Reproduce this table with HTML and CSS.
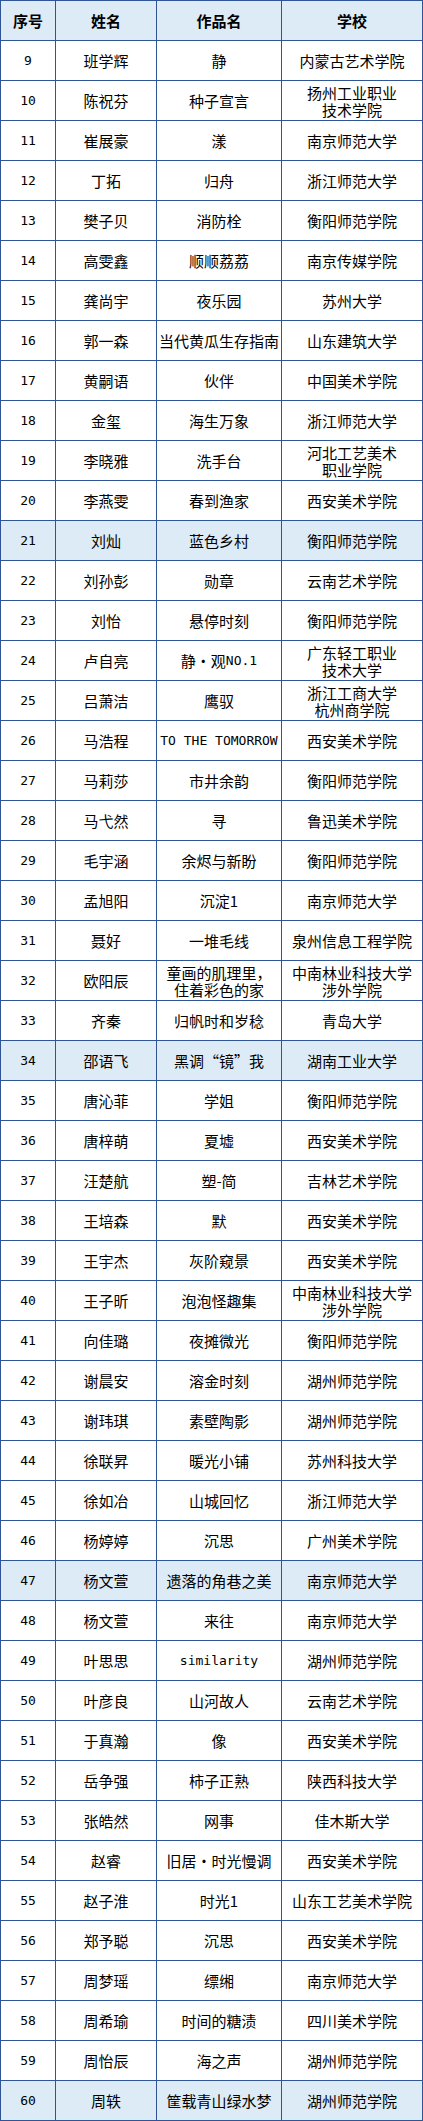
FILE: index.html
```html
<!DOCTYPE html>
<html lang="zh-CN">
<head>
<meta charset="utf-8">
<title>作品名单</title>
<link rel="stylesheet" href="styles.css">
</head>
<body>
<div class="sheet">
  <div class="row head"><div class="cell">序号</div><div class="cell">姓名</div><div class="cell">作品名</div><div class="cell">学校</div></div>
  <div class="row"><div class="cell num">9</div><div class="cell">班学辉</div><div class="cell">静</div><div class="cell">内蒙古艺术学院</div></div>
  <div class="row"><div class="cell num">10</div><div class="cell">陈祝芬</div><div class="cell">种子宣言</div><div class="cell">扬州工业职业<br>技术学院</div></div>
  <div class="row"><div class="cell num">11</div><div class="cell">崔展豪</div><div class="cell">漾</div><div class="cell">南京师范大学</div></div>
  <div class="row"><div class="cell num">12</div><div class="cell">丁拓</div><div class="cell">归舟</div><div class="cell">浙江师范大学</div></div>
  <div class="row"><div class="cell num">13</div><div class="cell">樊子贝</div><div class="cell">消防栓</div><div class="cell">衡阳师范学院</div></div>
  <div class="row"><div class="cell num">14</div><div class="cell">高雯鑫</div><div class="cell">顺顺荔荔</div><div class="cell">南京传媒学院</div></div>
  <div class="row"><div class="cell num">15</div><div class="cell">龚尚宇</div><div class="cell">夜乐园</div><div class="cell">苏州大学</div></div>
  <div class="row"><div class="cell num">16</div><div class="cell">郭一森</div><div class="cell">当代黄瓜生存指南</div><div class="cell">山东建筑大学</div></div>
  <div class="row"><div class="cell num">17</div><div class="cell">黄嗣语</div><div class="cell">伙伴</div><div class="cell">中国美术学院</div></div>
  <div class="row"><div class="cell num">18</div><div class="cell">金玺</div><div class="cell">海生万象</div><div class="cell">浙江师范大学</div></div>
  <div class="row"><div class="cell num">19</div><div class="cell">李晓雅</div><div class="cell">洗手台</div><div class="cell">河北工艺美术<br>职业学院</div></div>
  <div class="row"><div class="cell num">20</div><div class="cell">李燕雯</div><div class="cell">春到渔家</div><div class="cell">西安美术学院</div></div>
  <div class="row hl"><div class="cell num">21</div><div class="cell">刘灿</div><div class="cell">蓝色乡村</div><div class="cell">衡阳师范学院</div></div>
  <div class="row"><div class="cell num">22</div><div class="cell">刘孙彭</div><div class="cell">勋章</div><div class="cell">云南艺术学院</div></div>
  <div class="row"><div class="cell num">23</div><div class="cell">刘怡</div><div class="cell">悬停时刻</div><div class="cell">衡阳师范学院</div></div>
  <div class="row"><div class="cell num">24</div><div class="cell">卢自亮</div><div class="cell">静・观<span class="mono">NO.1</span></div><div class="cell">广东轻工职业<br>技术大学</div></div>
  <div class="row"><div class="cell num">25</div><div class="cell">吕萧洁</div><div class="cell">鹰驭</div><div class="cell">浙江工商大学<br>杭州商学院</div></div>
  <div class="row"><div class="cell num">26</div><div class="cell">马浩程</div><div class="cell mono">TO THE TOMORROW</div><div class="cell">西安美术学院</div></div>
  <div class="row"><div class="cell num">27</div><div class="cell">马莉莎</div><div class="cell">市井余韵</div><div class="cell">衡阳师范学院</div></div>
  <div class="row"><div class="cell num">28</div><div class="cell">马弋然</div><div class="cell">寻</div><div class="cell">鲁迅美术学院</div></div>
  <div class="row"><div class="cell num">29</div><div class="cell">毛宇涵</div><div class="cell">余烬与新盼</div><div class="cell">衡阳师范学院</div></div>
  <div class="row"><div class="cell num">30</div><div class="cell">孟旭阳</div><div class="cell">沉淀1</div><div class="cell">南京师范大学</div></div>
  <div class="row"><div class="cell num">31</div><div class="cell">聂好</div><div class="cell">一堆毛线</div><div class="cell">泉州信息工程学院</div></div>
  <div class="row"><div class="cell num">32</div><div class="cell">欧阳辰</div><div class="cell">童画的肌理里，<br>住着彩色的家</div><div class="cell">中南林业科技大学<br>涉外学院</div></div>
  <div class="row"><div class="cell num">33</div><div class="cell">齐秦</div><div class="cell">归帆时和岁稔</div><div class="cell">青岛大学</div></div>
  <div class="row hl"><div class="cell num">34</div><div class="cell">邵语飞</div><div class="cell">黑调“镜”我</div><div class="cell">湖南工业大学</div></div>
  <div class="row"><div class="cell num">35</div><div class="cell">唐沁菲</div><div class="cell">学姐</div><div class="cell">衡阳师范学院</div></div>
  <div class="row"><div class="cell num">36</div><div class="cell">唐梓萌</div><div class="cell">夏墟</div><div class="cell">西安美术学院</div></div>
  <div class="row"><div class="cell num">37</div><div class="cell">汪楚航</div><div class="cell">塑-简</div><div class="cell">吉林艺术学院</div></div>
  <div class="row"><div class="cell num">38</div><div class="cell">王培森</div><div class="cell">默</div><div class="cell">西安美术学院</div></div>
  <div class="row"><div class="cell num">39</div><div class="cell">王宇杰</div><div class="cell">灰阶窥景</div><div class="cell">西安美术学院</div></div>
  <div class="row"><div class="cell num">40</div><div class="cell">王子昕</div><div class="cell">泡泡怪趣集</div><div class="cell">中南林业科技大学<br>涉外学院</div></div>
  <div class="row"><div class="cell num">41</div><div class="cell">向佳璐</div><div class="cell">夜摊微光</div><div class="cell">衡阳师范学院</div></div>
  <div class="row"><div class="cell num">42</div><div class="cell">谢晨安</div><div class="cell">溶金时刻</div><div class="cell">湖州师范学院</div></div>
  <div class="row"><div class="cell num">43</div><div class="cell">谢玮琪</div><div class="cell">素壁陶影</div><div class="cell">湖州师范学院</div></div>
  <div class="row"><div class="cell num">44</div><div class="cell">徐联昇</div><div class="cell">暖光小铺</div><div class="cell">苏州科技大学</div></div>
  <div class="row"><div class="cell num">45</div><div class="cell">徐如冶</div><div class="cell">山城回忆</div><div class="cell">浙江师范大学</div></div>
  <div class="row"><div class="cell num">46</div><div class="cell">杨婷婷</div><div class="cell">沉思</div><div class="cell">广州美术学院</div></div>
  <div class="row hl"><div class="cell num">47</div><div class="cell">杨文萱</div><div class="cell">遗落的角巷之美</div><div class="cell">南京师范大学</div></div>
  <div class="row"><div class="cell num">48</div><div class="cell">杨文萱</div><div class="cell">来往</div><div class="cell">南京师范大学</div></div>
  <div class="row"><div class="cell num">49</div><div class="cell">叶思思</div><div class="cell mono">similarity</div><div class="cell">湖州师范学院</div></div>
  <div class="row"><div class="cell num">50</div><div class="cell">叶彦良</div><div class="cell">山河故人</div><div class="cell">云南艺术学院</div></div>
  <div class="row"><div class="cell num">51</div><div class="cell">于真瀚</div><div class="cell">像</div><div class="cell">西安美术学院</div></div>
  <div class="row"><div class="cell num">52</div><div class="cell">岳争强</div><div class="cell">柿子正熟</div><div class="cell">陕西科技大学</div></div>
  <div class="row"><div class="cell num">53</div><div class="cell">张皓然</div><div class="cell">网事</div><div class="cell">佳木斯大学</div></div>
  <div class="row"><div class="cell num">54</div><div class="cell">赵睿</div><div class="cell">旧居•时光慢调</div><div class="cell">西安美术学院</div></div>
  <div class="row"><div class="cell num">55</div><div class="cell">赵子淮</div><div class="cell">时光1</div><div class="cell">山东工艺美术学院</div></div>
  <div class="row"><div class="cell num">56</div><div class="cell">郑予聪</div><div class="cell">沉思</div><div class="cell">西安美术学院</div></div>
  <div class="row"><div class="cell num">57</div><div class="cell">周梦瑶</div><div class="cell">缥缃</div><div class="cell">南京师范大学</div></div>
  <div class="row"><div class="cell num">58</div><div class="cell">周希瑜</div><div class="cell">时间的糖渍</div><div class="cell">四川美术学院</div></div>
  <div class="row"><div class="cell num">59</div><div class="cell">周怡辰</div><div class="cell">海之声</div><div class="cell">湖州师范学院</div></div>
  <div class="row hl"><div class="cell num">60</div><div class="cell">周轶</div><div class="cell">筐载青山绿水梦</div><div class="cell">湖州师范学院</div></div>
</div>
</body>
</html>
```

FILE: styles.css
```css
html, body {
  margin: 0;
  padding: 0;
  background: #ffffff;
}

body {
  font-family: "Noto Sans CJK SC", "Noto Sans", sans-serif;
  font-size: 15px;
  color: #000000;
}

.sheet {
  width: 423px;
  box-sizing: border-box;
  display: grid;
  grid-template-columns: 54px 100px 124px 140px;
  grid-auto-rows: 39px;
  gap: 1px;
  padding: 1px;
  background: #2f5597;
}

.row {
  display: contents;
}

.cell {
  background: #ffffff;
  display: flex;
  align-items: center;
  justify-content: center;
  text-align: center;
  line-height: 17px;
  white-space: nowrap;
  overflow: hidden;
}

.head .cell {
  background: #ddebf7;
  font-weight: bold;
}

.hl .cell {
  background: #ddebf7;
}

.num {
  font-family: "DejaVu Sans Mono", "Liberation Mono", monospace;
  font-size: 13px;
}

.mono {
  font-family: "DejaVu Sans Mono", "Liberation Mono", monospace;
  font-size: 13px;
}
```
